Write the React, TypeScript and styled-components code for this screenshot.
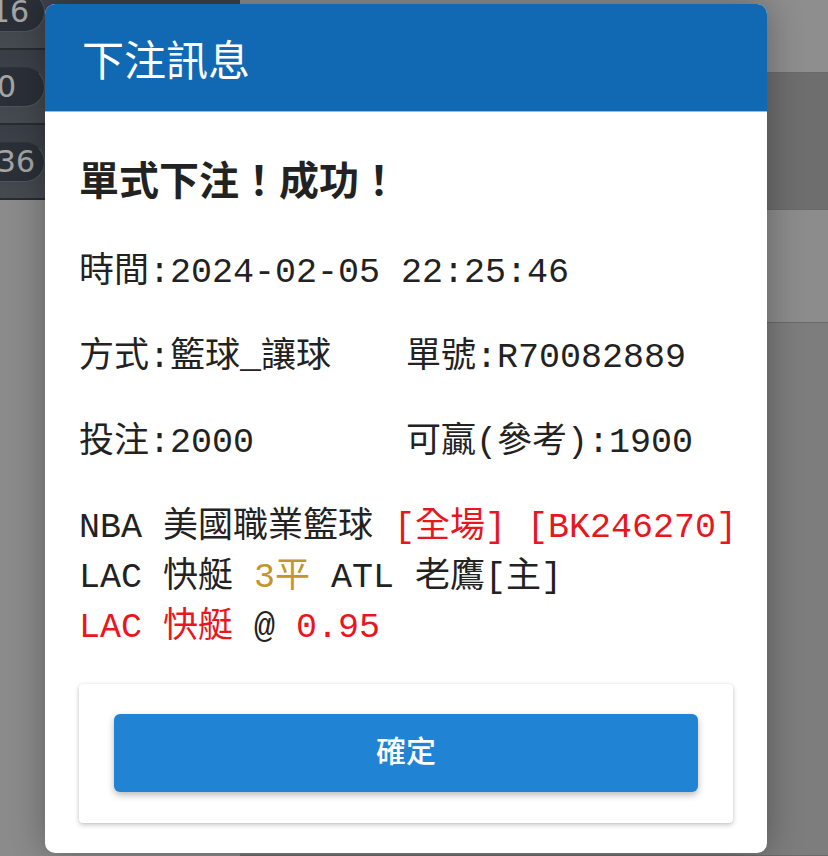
import React from 'react';
import styled, { createGlobalStyle } from 'styled-components';

const GlobalStyle = createGlobalStyle`
  html, body { margin: 0; padding: 0; }
  body { overflow: hidden; font-family: "Noto Sans", "Noto Sans CJK TC", sans-serif; }
`;

const Screen = styled.div`
  position: relative;
  width: 100vw;
  height: 100vh;
  overflow: hidden;
  display: flex;
  background: #d4d4d4;
`;

const Rail = styled.aside`
  width: 240px;
  flex: none;
  display: flex;
  flex-direction: column;
  background: #d6d6d6;
`;

// the list is scrolled a little, so the first row is cut at the top
const RailList = styled.div`
  margin-top: -25px;
  display: flex;
  flex-direction: column;
`;

const RailRow = styled.div`
  height: 73px;
  display: flex;
  align-items: center;
  background: linear-gradient(#58606b, #6c737d);
  border-bottom: 2px solid #3e444d;
`;

const Pill = styled.div<{ $w: number; $pad: number }>`
  height: 40px;
  width: ${p => p.$w}px;
  margin-left: ${p => 45 - p.$w}px;
  box-sizing: border-box;
  padding-right: ${p => p.$pad}px;
  border-radius: 20px;
  background: #434b57;
  border: 1px solid #7a828c;
  border-top-color: #4a525d;
  display: flex;
  align-items: center;
  justify-content: flex-end;
  font: 30px/1 "DejaVu Sans", sans-serif;
  color: #fdfdfd;
`;

const Main = styled.main`
  flex: 1;
  display: flex;
  flex-direction: column;
`;

const Band = styled.div<{ $h?: number; $bg: string }>`
  height: ${p => (p.$h ? `${p.$h}px` : 'auto')};
  flex: ${p => (p.$h ? 'none' : '1')};
  background: ${p => p.$bg};
  border-bottom: 1px solid #a4a4a4;
`;

const Overlay = styled.div`
  position: absolute;
  inset: 0;
  background: rgba(0, 0, 0, 0.35);
`;

const Dialog = styled.section`
  position: absolute;
  left: 45px;
  top: 4px;
  width: 722px;
  height: 849px;
  background: #fff;
  border-radius: 10px;
  overflow: hidden;
  box-shadow: 0 0 36px rgba(0, 0, 0, 0.32);
  display: flex;
  flex-direction: column;
`;

const Header = styled.header`
  height: 107px;
  flex: none;
  display: flex;
  align-items: center;
  padding: 0 37px;
  background: #1169b4;
  border-bottom: 1px solid #8fbde6;
  color: #fff;
  font: 400 42px/1 "Noto Sans CJK TC", sans-serif;
`;

const Body = styled.div`
  padding: 0 34px;
  display: flex;
  flex-direction: column;
  gap: 34px;
`;

const Heading = styled.h2`
  margin: 38px 0 8px;
  font: 700 40px/56px "Noto Sans CJK TC", sans-serif;
  color: #222;
`;

const Line = styled.p`
  margin: 0;
  font: 35px/51px "Liberation Mono", "Noto Sans CJK TC", monospace;
  color: #222;
  white-space: pre;
`;

const Pair = styled.div`
  display: grid;
  grid-template-columns: 1fr 1fr;
`;

const Ticket = styled.div`
  display: flex;
  flex-direction: column;
  margin-bottom: -3px;
  font: 35px/50px "Liberation Mono", "Noto Sans CJK TC", monospace;
  color: #222;
  white-space: pre;
`;

const Mark = styled.span<{ $tone: 'red' | 'gold' }>`
  color: ${p => (p.$tone === 'red' ? '#e8161d' : '#c4952a')};
`;

const Card = styled.div`
  padding: 30px 35px 31px;
  background: #fff;
  border-radius: 4px;
  box-shadow: 0 2px 5px rgba(0, 0, 0, 0.22), 0 0 2px rgba(0, 0, 0, 0.08);
`;

const ConfirmButton = styled.button`
  display: block;
  width: 100%;
  height: 78px;
  padding: 0 0 8px;
  border: none;
  border-radius: 6px;
  background: #2183d4;
  color: #fff;
  font: 500 30px/1 "Noto Sans CJK TC", sans-serif;
  box-shadow: 0 3px 7px rgba(0, 0, 0, 0.28);
  cursor: pointer;
`;

const pills = [
  { label: '16', w: 100, pad: 15 },
  { label: '0', w: 95, pad: 28 },
  { label: '36', w: 95, pad: 9 },
];

export default function App() {
  return (
    <>
      <GlobalStyle />
      <Screen>
        <Rail>
          <RailList>
            {pills.map(p => (
              <RailRow key={p.label}>
                <Pill $w={p.w} $pad={p.pad}>{p.label}</Pill>
              </RailRow>
            ))}
          </RailList>
        </Rail>
        <Main>
          <Band $h={72} $bg="#dbdbdb" />
          <Band $h={136} $bg="#aaaaaa" />
          <Band $h={112} $bg="#d8d8d8" />
          <Band $bg="#c0c0c0" />
        </Main>
        <Overlay />
        <Dialog>
          <Header>下注訊息</Header>
          <Body>
            <Heading>單式下注！成功！</Heading>
            <Line>時間:2024-02-05 22:25:46</Line>
            <Pair>
              <Line>方式:籃球_讓球</Line>
              <Line>單號:R70082889</Line>
            </Pair>
            <Pair>
              <Line>投注:2000</Line>
              <Line>可贏(參考):1900</Line>
            </Pair>
            <Ticket>
              <span>NBA 美國職業籃球 <Mark $tone="red">[全場] [BK246270]</Mark></span>
              <span>LAC 快艇 <Mark $tone="gold">3平</Mark> ATL 老鷹[主]</span>
              <span><Mark $tone="red">LAC 快艇</Mark> @ <Mark $tone="red">0.95</Mark></span>
            </Ticket>
            <Card>
              <ConfirmButton>確定</ConfirmButton>
            </Card>
          </Body>
        </Dialog>
      </Screen>
    </>
  );
}
